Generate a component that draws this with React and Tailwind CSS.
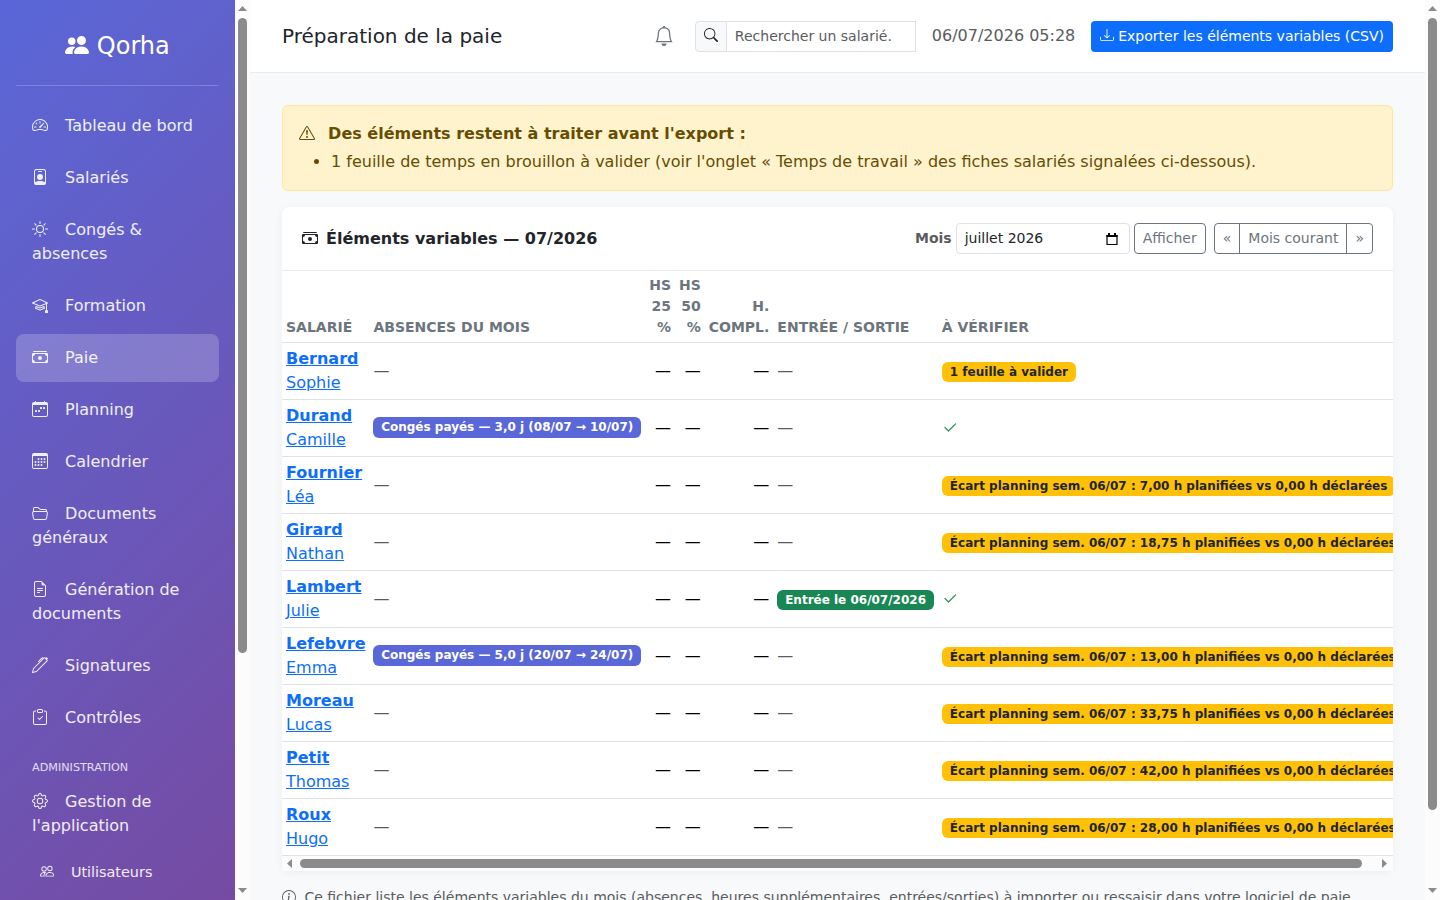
import React from 'react';
import {
  BsBell,
  BsCalendar3,
  BsCalendarWeek,
  BsCashStack,
  BsCheck2,
  BsClipboardCheck,
  BsDownload,
  BsExclamationTriangle,
  BsFileEarmarkText,
  BsFolder2Open,
  BsGear,
  BsInfoCircle,
  BsMortarboard,
  BsPen,
  BsPeople,
  BsPeopleFill,
  BsPersonBadge,
  BsSearch,
  BsSpeedometer2,
  BsSun,
} from 'react-icons/bs';

const navItems = [
  { label: 'Tableau de bord', icon: BsSpeedometer2 },
  { label: 'Salariés', icon: BsPersonBadge },
  { label: 'Congés & absences', icon: BsSun },
  { label: 'Formation', icon: BsMortarboard },
  { label: 'Paie', icon: BsCashStack, active: true },
  { label: 'Planning', icon: BsCalendarWeek },
  { label: 'Calendrier', icon: BsCalendar3 },
  { label: 'Documents généraux', icon: BsFolder2Open },
  { label: 'Génération de documents', icon: BsFileEarmarkText },
  { label: 'Signatures', icon: BsPen },
  { label: 'Contrôles', icon: BsClipboardCheck },
];

const rows = [
  { nom: 'Bernard', prenom: 'Sophie', alerte: '1 feuille à valider' },
  { nom: 'Durand', prenom: 'Camille', absence: 'Congés payés — 3,0 j (08/07 → 10/07)' },
  { nom: 'Fournier', prenom: 'Léa', alerte: 'Écart planning sem. 06/07 : 7,00 h planifiées vs 0,00 h déclarées' },
  { nom: 'Girard', prenom: 'Nathan', alerte: 'Écart planning sem. 06/07 : 18,75 h planifiées vs 0,00 h déclarées' },
  { nom: 'Lambert', prenom: 'Julie', entree: 'Entrée le 06/07/2026' },
  {
    nom: 'Lefebvre',
    prenom: 'Emma',
    absence: 'Congés payés — 5,0 j (20/07 → 24/07)',
    alerte: 'Écart planning sem. 06/07 : 13,00 h planifiées vs 0,00 h déclarées',
  },
  { nom: 'Moreau', prenom: 'Lucas', alerte: 'Écart planning sem. 06/07 : 33,75 h planifiées vs 0,00 h déclarées' },
  { nom: 'Petit', prenom: 'Thomas', alerte: 'Écart planning sem. 06/07 : 42,00 h planifiées vs 0,00 h déclarées' },
  { nom: 'Roux', prenom: 'Hugo', alerte: 'Écart planning sem. 06/07 : 28,00 h planifiées vs 0,00 h déclarées' },
];

const Arrow = ({ className }) => (
  <svg viewBox="0 0 9 5" className={`w-[9px] h-[5px] shrink-0 ${className || ''}`} fill="#8b8b8b">
    <path d="M4.5 0L9 5H0z" />
  </svg>
);

const VerticalScrollbar = ({ thumbClass }) => (
  <div className="w-[15px] h-full shrink-0 bg-[#fcfcfc] flex flex-col items-center justify-between pt-[6px] pb-[7px]">
    <div className="flex flex-col items-center gap-[7px]">
      <Arrow />
      <div className={`w-[9px] rounded-full bg-[#8b8b8b] ${thumbClass}`} />
    </div>
    <Arrow className="rotate-180" />
  </div>
);

const NavLink = ({ item }) => {
  const Icon = item.icon;
  return (
    <a
      className={`block rounded-lg px-4 py-3 mb-1 text-base leading-6 text-white/90 ${item.active ? 'bg-white/20' : ''}`}
    >
      <span className="inline-block w-5 mr-2">
        <Icon className="inline-block align-[-0.125em]" />
      </span>{' '}
      {item.label}
    </a>
  );
};

const Sidebar = () => (
  <aside className="w-[250px] h-full shrink-0 flex">
    <div className="w-[235px] h-full overflow-hidden px-4 bg-[linear-gradient(135deg,#5a67d8_0%,#764ba2_100%)]">
      <div className="h-[86px] mb-4 pt-[28px] border-b border-white/20 text-center text-2xl leading-9 text-white">
        <BsPeopleFill className="inline-block align-[-0.125em]" /> Qorha
      </div>
      <nav>
        {navItems.map((item) => (
          <NavLink key={item.label} item={item} />
        ))}
        <div className="h-8 px-4 pt-[13px] text-[11.2px] leading-[17px] uppercase text-white/80">Administration</div>
        <NavLink item={{ label: "Gestion de l'application", icon: BsGear }} />
        <a className="block pl-6 py-2 text-[14.4px] leading-[21.6px] text-white/90">
          <span className="inline-block w-[18px] mr-[8.3px]">
            <BsPeople className="inline-block align-[-0.125em]" />
          </span>{' '}
          Utilisateurs
        </a>
      </nav>
    </div>
    <VerticalScrollbar thumbClass="h-[635px]" />
  </aside>
);

const TopBar = () => (
  <header className="h-[73px] shrink-0 bg-white border-b border-[#e9ecef] px-8 flex items-center justify-between">
    <h1 className="text-xl text-[#212529]">Préparation de la paie</h1>
    <div className="flex items-center">
      <BsBell className="w-5 h-5 mr-[21px] text-[#6c757d]" />
      <div className="flex w-[221px] h-[31px] mr-4 text-sm">
        <div className="w-8 border border-[#dee2e6] rounded-l bg-[#f8f9fa] flex items-center justify-center text-[#212529]">
          <BsSearch className="w-[14px] h-[14px] mb-[2px]" />
        </div>
        <div className="flex-1 border border-l-0 border-[#dee2e6] px-2 leading-[29px] text-[#595c5f]">
          Rechercher un salarié.
        </div>
      </div>
      <span className="mr-[15.5px] text-base text-[#595c5f]">06/07/2026 05:28</span>
      <button className="h-[31px] px-[9px] rounded bg-[#0d6efd] text-white text-sm leading-[31px] whitespace-nowrap">
        <BsDownload className="inline-block align-[-0.125em]" /> Exporter les éléments variables (CSV)
      </button>
    </div>
  </header>
);

const Badge = ({ className, children }) => (
  <span
    className={`inline-block rounded-md text-xs leading-3 font-bold whitespace-nowrap align-baseline ${className}`}
  >
    {children}
  </span>
);

const Dash = () => <span className="text-[#595c5f]">—</span>;

const PayTable = () => (
  <div className="overflow-hidden">
    <table className="table-fixed w-[1129px] border-collapse text-base leading-6">
      <colgroup>
        <col className="w-[87.4px]" />
        <col className="w-[275.6px]" />
        <col className="w-[30px]" />
        <col className="w-[29.7px]" />
        <col className="w-[68.7px]" />
        <col className="w-[164.4px]" />
        <col />
      </colgroup>
      <thead>
        <tr className="border-b border-[#dee2e6] text-sm leading-[21px] font-bold uppercase text-[#6c757d] text-left align-bottom">
          <th className="p-1">Salarié</th>
          <th className="p-1">Absences du mois</th>
          <th className="p-1 text-right">HS 25 %</th>
          <th className="p-1 text-right">HS 50 %</th>
          <th className="p-1 text-right">H. compl.</th>
          <th className="p-1 whitespace-nowrap">Entrée / Sortie</th>
          <th className="p-1">À vérifier</th>
        </tr>
      </thead>
      <tbody>
        {rows.map((row) => (
          <tr key={row.nom} className="h-[57px] border-b border-[#dee2e6] align-middle text-black">
            <td className="p-1">
              <a className="text-[#0d6efd] underline">
                <strong className="font-bold">{row.nom}</strong>
                <br />
                {row.prenom}
              </a>
            </td>
            <td className={row.absence ? 'px-1 pt-1 pb-2' : 'p-1'}>
              {row.absence ? (
                <Badge className="px-[7.8px] pt-[4px] pb-[5px] mb-px bg-[#5a67d8] text-white">{row.absence}</Badge>
              ) : (
                <Dash />
              )}
            </td>
            <td className="p-1 text-right">—</td>
            <td className="p-1 text-right">—</td>
            <td className="p-1 text-right">—</td>
            <td className="p-1">
              {row.entree ? (
                <Badge className="px-[7.8px] py-[4.2px] bg-[#198754] text-white">{row.entree}</Badge>
              ) : (
                <Dash />
              )}
            </td>
            <td className="p-1">
              {row.alerte ? (
                <Badge className="px-[8.1px] py-[4.2px] bg-[#ffc107] text-[#212529]">{row.alerte}</Badge>
              ) : (
                <BsCheck2 className="inline-block align-[-0.18em] text-[#198754] stroke-[0.4px]" />
              )}
            </td>
          </tr>
        ))}
      </tbody>
    </table>
    {/* Horizontal scrollbar */}
    <div className="h-[15px] bg-[#fcfcfc] flex items-center justify-between pl-[3px] pr-[4px]">
      <div className="flex items-center gap-[6px]">
        <Arrow className="-rotate-90" />
        <div className="w-[1062px] h-[9px] rounded-full bg-[#8b8b8b]" />
      </div>
      <Arrow className="rotate-90" />
    </div>
  </div>
);

const outlineButton = 'h-[31px] border border-[#6c757d] px-2 text-sm leading-[29px] text-[#6c757d]';

const App = () => {
  return (
    <div className="flex w-[1440px] h-[900px] overflow-hidden bg-[#f8f9fa] font-['DejaVu_Sans',sans-serif] text-[#212529]">
      <Sidebar />

      <main className="flex-1 min-w-0 h-full overflow-hidden flex flex-col">
        <TopBar />

        <div className="p-8">
          {/* Warning */}
          <div className="mb-4 p-4 rounded-md border border-[#ffe69c] bg-[#fff3cd] text-[#664d03] leading-6">
            <BsExclamationTriangle className="inline-block align-[-0.125em] mr-2" />{' '}
            <strong className="font-bold">Des éléments restent à traiter avant l'export :</strong>
            <ul className="list-disc pl-8 mt-1">
              <li>
                1 feuille de temps en brouillon à valider (voir l'onglet « Temps de travail » des fiches salariés
                signalées ci-dessous).
              </li>
            </ul>
          </div>

          {/* Variable elements */}
          <section className="mb-4 rounded-lg bg-white shadow-[0_2px_10px_rgba(0,0,0,0.05)]">
            <div className="h-16 px-5 border-b border-[#e9ecef] flex items-center justify-between">
              <h2 className="text-base font-bold flex items-center gap-2">
                <BsCashStack className="mb-[2px]" /> Éléments variables — 07/2026
              </h2>
              <div className="flex items-center text-sm">
                <label className="mr-1 pb-px font-bold text-[#595c5f]">Mois</label>
                <div className="w-[174px] h-[31px] mr-1 pl-2 pr-[11px] border border-[#dee2e6] rounded flex items-center justify-between">
                  <span className="pb-[2px]">juillet 2026</span>
                  <svg viewBox="0 0 12 12" className="w-3 h-3" fill="none" stroke="#000">
                    <path d="M1 2.5h10v9H1z" strokeWidth="1.2" />
                    <path d="M.5 3h11M3 0v2M9 0v2" strokeWidth="2" />
                  </svg>
                </div>
                <button className={`${outlineButton} rounded mr-2`}>Afficher</button>
                <div className="flex">
                  <button className={`${outlineButton} rounded-l`}>«</button>
                  <button className={`${outlineButton} -ml-px`}>Mois courant</button>
                  <button className={`${outlineButton} rounded-r -ml-px`}>»</button>
                </div>
              </div>
            </div>
            <PayTable />
          </section>

          <p className="text-sm leading-[21px] text-[#595c5f] whitespace-nowrap">
            <BsInfoCircle className="inline-block align-[-0.125em] mr-1" /> Ce fichier liste les éléments variables du
            mois (absences, heures supplémentaires, entrées/sorties) à importer ou ressaisir dans votre logiciel de paie
          </p>
        </div>
      </main>

      <VerticalScrollbar thumbClass="h-[792px]" />
    </div>
  );
};

export default App;
